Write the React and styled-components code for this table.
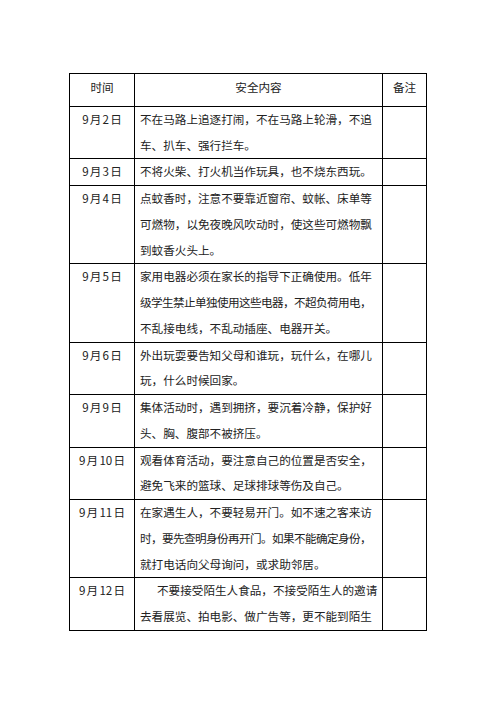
import React from "react";
import styled, { createGlobalStyle } from "styled-components";

const rows = [
  { date: "9 月 2 日", lines: ["不在马路上追逐打闹，不在马路上轮滑，不追", "车、扒车、强行拦车。"] },
  { date: "9 月 3 日", lines: ["不将火柴、打火机当作玩具，也不烧东西玩。"] },
  {
    date: "9 月 4 日",
    lines: ["点蚊香时，注意不要靠近窗帘、蚊帐、床单等", "可燃物，以免夜晚风吹动时，使这些可燃物飘", "到蚊香火头上。"],
  },
  {
    date: "9 月 5 日",
    lines: ["家用电器必须在家长的指导下正确使用。低年", "级学生禁止单独使用这些电器，不超负荷用电，", "不乱接电线，不乱动插座、电器开关。"],
  },
  { date: "9 月 6 日", lines: ["外出玩耍要告知父母和谁玩，玩什么，在哪儿", "玩，什么时候回家。"] },
  { date: "9 月 9 日", lines: ["集体活动时，遇到拥挤，要沉着冷静，保护好", "头、胸、腹部不被挤压。"] },
  { date: "9 月 10 日", lines: ["观看体育活动，要注意自己的位置是否安全，", "避免飞来的篮球、足球排球等伤及自己。"] },
  {
    date: "9 月 11 日",
    lines: ["在家遇生人，不要轻易开门。如不速之客来访", "时，要先查明身份再开门。如果不能确定身份，", "就打电话向父母询问，或求助邻居。"],
  },
  {
    date: "9 月 12 日",
    indent: true,
    lines: ["不要接受陌生人食品，不接受陌生人的邀请", "去看展览、拍电影、做广告等，更不能到陌生"],
  },
];

const GlobalStyle = createGlobalStyle`
  body {
    margin: 0;
    background: #ffffff;
    font-family: "Noto Sans CJK SC", "Liberation Sans", sans-serif;
    color: #222222;
  }
`;

const Page = styled.div`
  width: 496px;
  height: 702px;
  padding-top: 73px;
  box-sizing: border-box;
  overflow: hidden;
`;

const Table = styled.table`
  width: 357px;
  margin: 0 auto;
  border-collapse: collapse;
  table-layout: fixed;
  font-size: 11.6px;
  line-height: 25.75px;
`;

const HeadCell = styled.th`
  border: 1px solid #000;
  font-weight: 400;
  text-align: center;
  vertical-align: top;
  padding: 1px 0 5px;
`;

const DateCell = styled.td`
  border: 1px solid #000;
  text-align: center;
  vertical-align: top;
  padding: 0;
  word-spacing: -1.4px;
  white-space: nowrap;
`;

const ContentCell = styled.td`
  border: 1px solid #000;
  vertical-align: top;
  padding: 0 0 0 5px;
  overflow: visible;
`;

const NoteCell = styled.td`
  border: 1px solid #000;
  padding: 0;
`;

const Line = styled.span`
  display: block;
  white-space: nowrap;
  letter-spacing: ${(p) => (p.$tight ? "-0.6px" : "0")};
  padding-left: ${(p) => (p.$indent ? "17px" : "0")};
`;

export default function App() {
  return (
    <Page>
      <GlobalStyle />
      <Table>
        <colgroup>
          <col style={{ width: 65 }} />
          <col style={{ width: 248 }} />
          <col style={{ width: 44 }} />
        </colgroup>
        <thead>
          <tr>
            <HeadCell>时间</HeadCell>
            <HeadCell>安全内容</HeadCell>
            <HeadCell>备注</HeadCell>
          </tr>
        </thead>
        <tbody>
          {rows.map((row) => (
            <tr key={row.date}>
              <DateCell>{row.date}</DateCell>
              <ContentCell>
                {row.lines.map((text, i) => (
                  <Line key={i} $indent={row.indent && i === 0} $tight={text.length > 20}>
                    {text}
                  </Line>
                ))}
              </ContentCell>
              <NoteCell />
            </tr>
          ))}
        </tbody>
      </Table>
    </Page>
  );
}
